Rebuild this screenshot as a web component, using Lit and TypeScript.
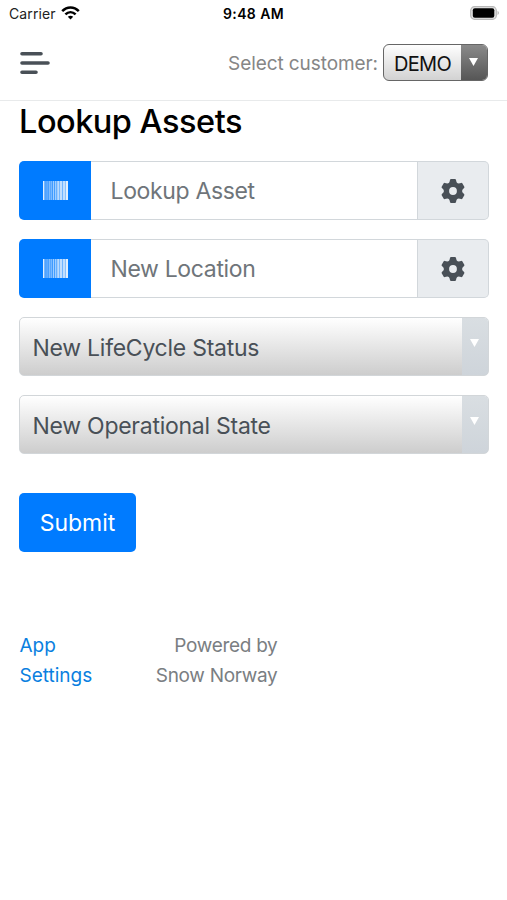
import { LitElement, html, css, svg } from "lit";
import { customElement, property } from "lit/decorators.js";

const bars: [number, number, number][] = [
  [0, 1.4, 0.85], [2.6, 0.9, 0.4], [4.4, 0.9, 0.4], [6.2, 1.2, 0.5], [8.2, 1, 0.45],
  [10, 1.2, 0.55], [12, 1.5, 0.55], [14.2, 2.3, 0.68], [17, 2.3, 0.7], [19.8, 2.4, 0.7], [22.6, 2.4, 0.85],
];
const teeth = [0, 60, 120, 180, 240, 300];

@customElement("scan-field")
export class ScanField extends LitElement {
  @property() label = "";
  static styles = css`
    :host { display: flex; height: 59px; box-sizing: border-box; }
    .scan { width: 72px; box-sizing: border-box; background: #007bff; border-radius: 5px 0 0 5px; display: flex; align-items: center; justify-content: center; }
    .input { flex: 1; min-width: 0; box-sizing: border-box; border: 1.5px solid #d2d7db; border-left: 0; display: flex; align-items: center; padding-left: 19.5px; color: #6f757a; font-size: 23px; letter-spacing: -0.35px; white-space: nowrap; }
    .gear { width: 71px; box-sizing: border-box; border: 1.5px solid #d2d7db; border-left: 0; border-radius: 0 5px 5px 0; background: #e9ecef; display: flex; align-items: center; justify-content: center; }
    svg { display: block; }
  `;
  render() {
    return html`
      <div class="scan"><svg width="25" height="19" viewBox="0 0 25 19" fill="#fff">
        <rect width="25" height="19" opacity="0.18"></rect>
        ${bars.map(([x, w, o]) => svg`<rect x=${x} y="0" width=${w} height="19" opacity=${o}></rect>`)}
      </svg></div>
      <div class="input"><span>${this.label}</span></div>
      <div class="gear"><svg width="24" height="24" viewBox="-12 -12 24 24" fill="#495057">
        <circle r="6.6" fill="none" stroke="#495057" stroke-width="5.4"></circle>
        ${teeth.map((a) => svg`<path transform="rotate(${a})" d="M-3.9 -7.5L-3 -11Q-2.8 -11.9 -2 -11.9H2Q2.8 -11.9 3 -11L3.9 -7.5Z"></path>`)}
      </svg></div>`;
  }
}

@customElement("app-root")
export class AppRoot extends LitElement {
  static styles = css`
    :host { display: block; width: 507px; height: 900px; background: #fff; overflow: hidden; font-family: Inter, sans-serif; color: #000; }
    svg { display: block; }
    .status { height: 26px; padding: 1px 7px 0 9px; box-sizing: border-box; display: grid; grid-template-columns: 1fr auto 1fr; align-items: center; font-size: 14px; }
    .carrier { display: flex; align-items: center; gap: 6px; color: #222; letter-spacing: 0.1px; }
    .carrier svg { margin: -2px 0 0 -1px; }
    .time { font-weight: 600; letter-spacing: 0.4px; margin-right: 2px; }
    .battery { justify-self: end; margin-top: -1px; }
    .nav { height: 75px; box-sizing: border-box; border-bottom: 1px solid #e8eaeb; padding: 0 19px 0 20px; display: flex; align-items: center; }
    .customer { margin-left: auto; display: flex; align-items: center; gap: 5px; font-size: 19px; letter-spacing: -0.08px; color: #868686; }
    .pick { margin-top: -1px; width: 105px; height: 37px; box-sizing: border-box; border: 1.5px solid #666; border-radius: 6px; overflow: hidden; display: flex; color: #111; background: linear-gradient(#fefefe, #d2d2d2); }
    .pick span { flex: 1; display: flex; align-items: center; padding: 2px 0 0 10px; font-size: 20px; letter-spacing: -0.7px; }
    .pick i { width: 26px; display: flex; justify-content: center; padding: 13px 2px 0 0; box-sizing: border-box; background: linear-gradient(#8a8a8a, #565656); }
    main { padding: 0 18px 0 19px; }
    h1 { margin: 0; height: 60px; line-height: 41px; font-size: 32.5px; font-weight: 500; letter-spacing: -0.5px; white-space: nowrap; }
    .form { display: flex; flex-direction: column; gap: 19px; }
    .select { height: 59px; box-sizing: border-box; border: 1.5px solid #d2d6d9; border-radius: 5px; overflow: hidden; display: flex; background: linear-gradient(#fff, #cdcdcd); color: #495057; font-size: 23px; letter-spacing: -0.26px; }
    .select span { flex: 1; display: flex; align-items: center; padding: 3px 0 0 12.5px; white-space: nowrap; }
    .select i { width: 26px; box-sizing: border-box; padding: 21px 2px 0 0; display: flex; justify-content: center; background: linear-gradient(#d9dee2, #ced4da); }
    .submit { display: flex; align-items: center; justify-content: center; margin-top: 39px; width: 117px; height: 59px; border: 0; border-radius: 5px; background: #007bff; color: #fff; font: 400 23px Inter, sans-serif; padding: 0; }
    footer { margin-top: 79px; width: 259px; display: flex; justify-content: space-between; font-size: 19px; line-height: 29.5px; color: #7a7e82; }
    footer .links { color: #0a7fe0; padding-left: 0.5px; }
    footer .by { text-align: right; letter-spacing: -0.3px; padding-right: 0.5px; }
    .t { white-space: nowrap; }
  `;
  render() {
    const arrow = html`<svg width="9" height="8" viewBox="0 0 9 8" fill="#fff"><path d="M0 0H9L4.5 8Z"></path></svg>`;
    return html`
      <div class="status">
        <div class="carrier"><span class="t">Carrier</span>
          <svg width="19" height="14" viewBox="0 0 19 14" fill="none" stroke="#000" stroke-width="2.5"><path d="M1.2 5.2C6 .2 13 .2 17.8 5.2M4.4 8.4C7.4 5.5 11.6 5.5 14.6 8.4"></path><path d="M6.8 10.8Q9.5 8.5 12.2 10.8L9.5 13.6Z" fill="#000" stroke="none"></path></svg>
        </div>
        <span class="time t">9:48 AM</span>
        <svg class="battery" width="30" height="14" viewBox="0 0 30 14"><rect x=".7" y=".7" width="25.6" height="12.6" rx="3.8" fill="#e4e4e4" stroke="#b8b8b8" stroke-width="1.2"></rect><rect x="2.8" y="2.3" width="21.5" height="9.4" rx="2"></rect><path d="M27.6 4.8Q30 7 27.6 9.2Z" fill="#aaa"></path></svg>
      </div>
      <div class="nav">
        <svg width="30" height="24" viewBox="0 0 30 24" stroke="#495057" stroke-width="3.6" stroke-linecap="round"><path d="M2 2.8H21M2 12H28M2 21.2H16"></path></svg>
        <div class="customer"><span class="t">Select customer:</span><div class="pick"><span>DEMO</span><i>${arrow}</i></div></div>
      </div>
      <main>
        <h1><span class="t">Lookup Assets</span></h1>
        <div class="form">
          <scan-field label="Lookup Asset"></scan-field>
          <scan-field label="New Location"></scan-field>
          <div class="select"><span>New LifeCycle Status</span><i>${arrow}</i></div>
          <div class="select"><span>New Operational State</span><i>${arrow}</i></div>
        </div>
        <button class="submit">Submit</button>
        <footer><div class="links">App<br>Settings</div><div class="by">Powered by<br>Snow Norway</div></footer>
      </main>`;
  }
}
